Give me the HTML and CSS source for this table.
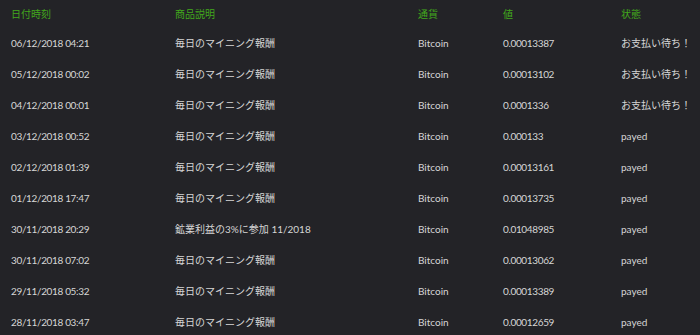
FILE: index.html
```html
<!DOCTYPE html>
<html lang="ja">
<head>
<meta charset="utf-8">
<link rel="stylesheet" href="styles.css">
</head>
<body>
<table class="tx">
  <thead>
    <tr>
      <th class="c-date">日付時刻</th>
      <th class="c-desc">商品説明</th>
      <th class="c-cur">通貨</th>
      <th class="c-val">値</th>
      <th class="c-st">状態</th>
    </tr>
  </thead>
  <tbody>
    <tr><td class="num">06/12/2018 04:21</td><td>毎日のマイニング報酬</td><td>Bitcoin</td><td class="num">0.00013387</td><td>お支払い待ち！</td></tr>
    <tr><td class="num">05/12/2018 00:02</td><td>毎日のマイニング報酬</td><td>Bitcoin</td><td class="num">0.00013102</td><td>お支払い待ち！</td></tr>
    <tr><td class="num">04/12/2018 00:01</td><td>毎日のマイニング報酬</td><td>Bitcoin</td><td class="num">0.0001336</td><td>お支払い待ち！</td></tr>
    <tr><td class="num">03/12/2018 00:52</td><td>毎日のマイニング報酬</td><td>Bitcoin</td><td class="num">0.000133</td><td>payed</td></tr>
    <tr><td class="num">02/12/2018 01:39</td><td>毎日のマイニング報酬</td><td>Bitcoin</td><td class="num">0.00013161</td><td>payed</td></tr>
    <tr><td class="num">01/12/2018 17:47</td><td>毎日のマイニング報酬</td><td>Bitcoin</td><td class="num">0.00013735</td><td>payed</td></tr>
    <tr><td class="num">30/11/2018 20:29</td><td>鉱業利益の3%に参加 11/2018</td><td>Bitcoin</td><td class="num">0.01048985</td><td>payed</td></tr>
    <tr><td class="num">30/11/2018 07:02</td><td>毎日のマイニング報酬</td><td>Bitcoin</td><td class="num">0.00013062</td><td>payed</td></tr>
    <tr><td class="num">29/11/2018 05:32</td><td>毎日のマイニング報酬</td><td>Bitcoin</td><td class="num">0.00013389</td><td>payed</td></tr>
    <tr><td class="num">28/11/2018 03:47</td><td>毎日のマイニング報酬</td><td>Bitcoin</td><td class="num">0.00012659</td><td>payed</td></tr>
  </tbody>
</table>
</body>
</html>
```
FILE: styles.css
```css
html, body {
  margin: 0;
  padding: 0;
  background: #232327;
}
.tx {
  width: 700px;
  border-collapse: collapse;
  table-layout: fixed;
  font-family: "Lato", "Noto Sans CJK JP", sans-serif;
  font-size: 10px;
  color: #d6d6d6;
}
.tx th, .tx td {
  box-sizing: border-box;
  padding: 0 0 0 11px;
  text-align: left;
  white-space: nowrap;
  vertical-align: middle;
}
.tx th {
  height: 27px;
  font-weight: normal;
  color: #42a81c;
}
.tx td {
  height: 31px;
}
.tx td.num {
  letter-spacing: -0.35px;
}
.c-date { width: 164px; }
.c-desc { width: 243px; }
.c-cur { width: 85px; }
.c-val { width: 118px; }
```
